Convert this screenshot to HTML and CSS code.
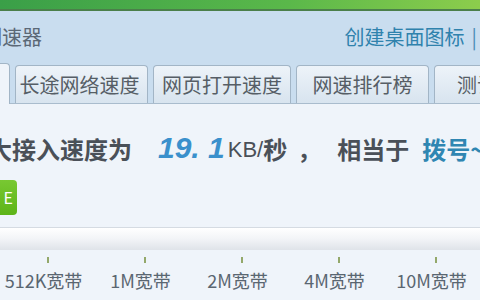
FILE: index.html
```html
<!DOCTYPE html>
<html>
<head>
<meta charset="utf-8">
<link rel="stylesheet" href="styles.css">
</head>
<body>
<div class="topbar"></div>
<div class="header">
  <div class="titlerow">
    <div class="title">测速器</div>
    <div class="links">创建桌面图标<span class="sep">|</span></div>
  </div>
  <div class="tabs">
    <div class="tab active"></div>
    <div class="tab t1">长途网络速度</div>
    <div class="tab t2">网页打开速度</div>
    <div class="tab t3">网速排行榜</div>
    <div class="tab t4">测试历史</div>
  </div>
</div>
<div class="content">
  <div class="speed">
    <span class="lead">大接入速度为</span>
    <span class="digits">19.&nbsp;1</span>
    <span class="unit">KB/</span><span class="lead">秒</span><span class="lead comma">，</span><span class="lead same">相当于</span>
    <span class="equiv">拨号~</span>
  </div>
  <div class="btnrow"><div class="btn">E</div></div>
  <div class="bar"></div>
  <div class="scale">
    <div class="mark"><i class="tick"></i><span>512K宽带</span></div>
    <div class="mark"><i class="tick"></i><span>1M宽带</span></div>
    <div class="mark"><i class="tick"></i><span>2M宽带</span></div>
    <div class="mark"><i class="tick"></i><span>4M宽带</span></div>
    <div class="mark"><i class="tick"></i><span>10M宽带</span></div>
  </div>
</div>
</body>
</html>
```
FILE: styles.css
```css
html, body {
  margin: 0;
  padding: 0;
}
body {
  width: 480px;
  height: 300px;
  overflow: hidden;
  background: #eff4fa;
  font-family: "Noto Sans CJK SC", "Noto Sans", sans-serif;
}
.topbar {
  height: 9px;
  background: linear-gradient(to right, #3a9f48, #5ab84a 60%, #8ccd4c);
  border-bottom: 2px solid #4b7f4a;
}
.header {
  background: #c9ddef;
  border-bottom: 1px solid #a9bccd;
}
.titlerow {
  height: 52px;
  display: flex;
  align-items: center;
  justify-content: space-between;
}
.title {
  font-size: 20px;
  color: #5b6876;
  margin-left: -18px;
  line-height: 1;
}
.links {
  font-size: 20px;
  color: #2f82ad;
  line-height: 1;
  white-space: nowrap;
  margin-right: 3px;
}
.sep {
  margin-left: 7px;
  color: #4a8db5;
}
.tabs {
  display: flex;
  gap: 5px;
  height: 40px;
  align-items: flex-end;
  white-space: nowrap;
}
.tab {
  flex: none;
  height: 38px;
  box-sizing: border-box;
  border: 1px solid #a2b5c6;
  border-bottom: none;
  border-radius: 4px 4px 0 0;
  background: linear-gradient(#edf3f9, #d8e4ef);
  font-size: 20px;
  color: #565e66;
  display: flex;
  align-items: center;
  justify-content: center;
  line-height: 1;
}
.tab.active {
  width: 40px;
  margin-left: -30px;
  height: 41px;
  margin-bottom: -1px;
  background: #eff4fa;
}
.t1 { width: 133px; padding-right: 4px; }
.t2 { width: 138px; }
.t3 { width: 133px; }
.t4 { width: 133px; justify-content: flex-start; padding-left: 22px; }
.content {
  display: flex;
  flex-direction: column;
}
.speed {
  height: 64px;
  padding-top: 12px;
  display: flex;
  align-items: center;
  white-space: nowrap;
  margin-left: -12px;
}
.lead {
  font-size: 24px;
  font-weight: bold;
  color: #4a5058;
}
.comma { margin-left: 10px; }
.same { margin-left: 16px; }
.digits {
  font-family: "Liberation Sans", sans-serif;
  font-style: italic;
  font-weight: bold;
  font-size: 30px;
  color: #3a90cc;
  margin-left: 26px;
}
.unit {
  font-family: "Liberation Sans", sans-serif;
  font-size: 22px;
  color: #4a5058;
  margin-left: 3px;
  margin-top: 4px;
}
.equiv {
  font-size: 24px;
  font-weight: bold;
  color: #2f86b2;
  margin-left: 13px;
}
.btnrow {
  height: 35px;
}
.btn {
  width: 17px;
  height: 35px;
  border-radius: 0 4px 4px 0;
  background: linear-gradient(#78c832, #5db418);
  color: #fff;
  font-size: 16px;
  line-height: 35px;
  text-align: right;
  overflow: hidden;
  box-sizing: border-box;
  padding-right: 4px;
}
.bar {
  margin-top: 12px;
  height: 22px;
  border-top: 1px solid #d5dbe2;
  background: linear-gradient(#ffffff, #f2f4f7 50%, #dfe3e9);
}
.scale {
  display: flex;
  margin-top: 7px;
  margin-left: -5px;
}
.mark {
  width: 97px;
  display: flex;
  flex-direction: column;
  align-items: center;
}
.tick {
  width: 2px;
  height: 6px;
  background: #93a86a;
  margin-bottom: 8px;
  margin-left: 8px;
}
.mark span {
  font-size: 18px;
  color: #5a6671;
  line-height: 19px;
  white-space: nowrap;
}
```
